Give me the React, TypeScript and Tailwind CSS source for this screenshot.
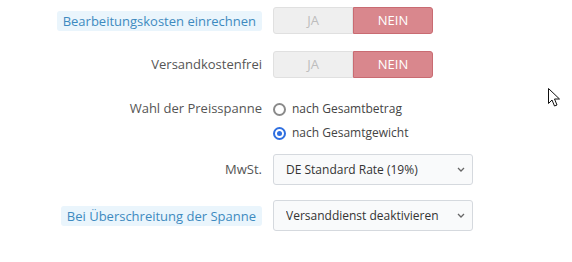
import { useState } from 'react';

function Toggle({ value, onChange }: { value: boolean; onChange: (v: boolean) => void }) {
  return (
    <div className="flex h-[27px] w-[160px] text-[13px]">
      <button
        onClick={() => onChange(true)}
        className={`w-[80px] rounded-l-[3px] border ${value ? 'border-[#c96b72] bg-[#d9878d] text-white' : 'border-[#e0e0e0] bg-[#efefef] text-[#bdbdbd]'}`}
      >
        JA
      </button>
      <button
        onClick={() => onChange(false)}
        className={`w-[80px] rounded-r-[3px] border ${!value ? 'border-[#c96b72] bg-[#d9878d] text-white' : 'border-[#e0e0e0] bg-[#efefef] text-[#bdbdbd]'}`}
      >
        NEIN
      </button>
    </div>
  );
}

function Label({ children, hint }: { children: string; hint?: boolean }) {
  return (
    <div className="flex w-[262px] justify-end">
      {hint ? (
        <span className="rounded-[3px] bg-[#eaf5fc] px-[6px] leading-[20px] text-[#3d8ac0]">{children}</span>
      ) : (
        <span className="text-[#555]">{children}</span>
      )}
    </div>
  );
}

function Select({ options }: { options: string[] }) {
  return (
    <div className="relative w-[200px]">
      <select className="h-[31px] w-full appearance-none rounded-[3px] border border-[#d5d9de] bg-[#f9fafb] pl-[12px] text-[12px] text-[#333] outline-none">
        {options.map((o) => (
          <option key={o}>{o}</option>
        ))}
      </select>
      <svg className="pointer-events-none absolute right-[7px] top-[12px]" width="10" height="7" viewBox="0 0 10 7">
        <path d="M2 2 L5 5 L8 2" fill="none" stroke="#666" strokeWidth="1.3" />
      </svg>
    </div>
  );
}

function Radio({ checked, label, onClick }: { checked: boolean; label: string; onClick: () => void }) {
  return (
    <div className="flex h-[24px] cursor-pointer items-center gap-[6px]" onClick={onClick}>
      <span
        className={`flex h-[13px] w-[13px] items-center justify-center rounded-full border-2 ${checked ? 'border-[#2f6fe0]' : 'border-[#8a8a8a]'}`}
      >
        {checked && <span className="h-[5px] w-[5px] rounded-full bg-[#2f6fe0]" />}
      </span>
      <span className="text-[12px] text-[#444]">{label}</span>
    </div>
  );
}

export default function App() {
  const [fees, setFees] = useState(false);
  const [free, setFree] = useState(false);
  const [range, setRange] = useState('gewicht');

  return (
    <div
      className="relative h-[262px] w-[572px] overflow-hidden bg-white pt-[7px] text-[13px]"
      style={{ fontFamily: '"Open Sans", sans-serif' }}
    >
      <div className="flex items-center gap-[11px]">
        <Label hint>Bearbeitungskosten einrechnen</Label>
        <Toggle value={fees} onChange={setFees} />
      </div>

      <div className="mt-[17px] flex items-center gap-[11px]">
        <Label>Versandkostenfrei</Label>
        <Toggle value={free} onChange={setFree} />
      </div>

      <div className="mt-[20px] flex items-start gap-[11px]">
        <div className="flex h-[22px] items-center">
          <Label>Wahl der Preisspanne</Label>
        </div>
        <div className="-mt-[1px] flex flex-col">
          <Radio checked={range === 'betrag'} label="nach Gesamtbetrag" onClick={() => setRange('betrag')} />
          <Radio checked={range === 'gewicht'} label="nach Gesamtgewicht" onClick={() => setRange('gewicht')} />
        </div>
      </div>

      <div className="mt-[9px] flex items-center gap-[11px]">
        <Label>MwSt.</Label>
        <Select options={['DE Standard Rate (19%)', 'DE Reduced Rate (7%)']} />
      </div>

      <div className="mt-[15px] flex items-center gap-[11px]">
        <Label hint>Bei Überschreitung der Spanne</Label>
        <Select options={['Versanddienst deaktivieren', 'Höchste Spanne verwenden']} />
      </div>

      {/* mouse pointer */}
      <svg className="absolute left-[547px] top-[87px]" width="14" height="21" viewBox="0 0 14 21">
        <path
          d="M1.5 1.5 L1.5 16.5 L5 13 L7.5 19 L10 18 L7.5 12 L12.5 12 Z"
          fill="white"
          stroke="#111"
          strokeWidth="1"
          strokeLinejoin="miter"
        />
      </svg>
    </div>
  );
}
